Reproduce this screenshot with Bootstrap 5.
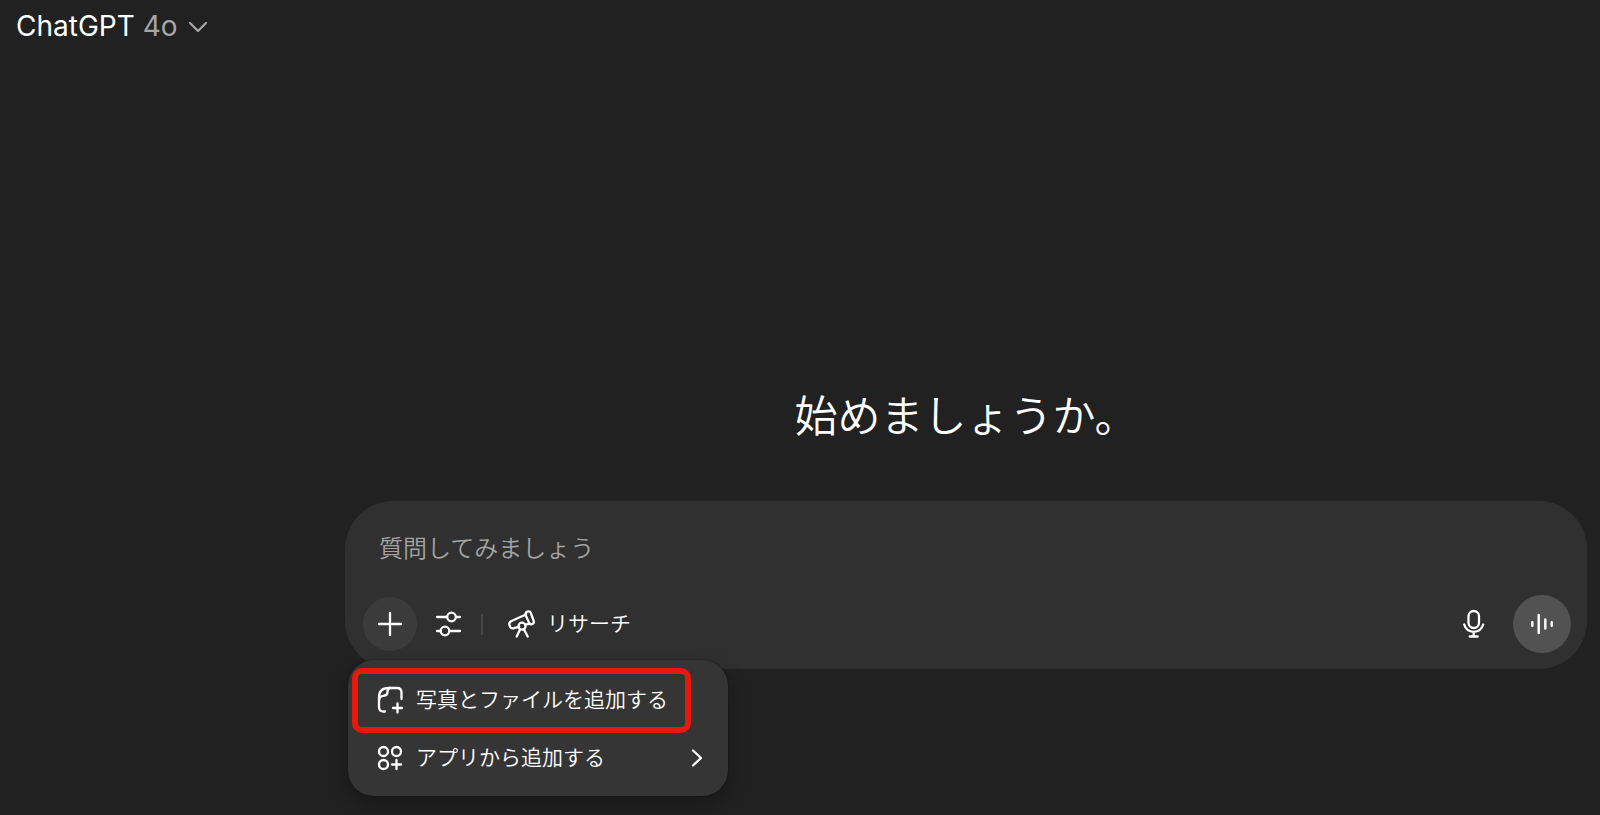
<!DOCTYPE html>
<html lang="ja" data-bs-theme="dark">
<head>
<meta charset="utf-8">
<meta name="viewport" content="width=device-width, initial-scale=1">
<title>ChatGPT</title>
<link href="https://cdn.jsdelivr.net/npm/bootstrap@5.3.0/dist/css/bootstrap.min.css" rel="stylesheet">
<style>
  body { background: #212121; color: #fff; font-family: Inter, "Noto Sans CJK JP", sans-serif; font-weight: 350; }
  svg { display: block; fill: none; stroke: currentColor; stroke-width: 2.3; stroke-linecap: round; stroke-linejoin: round; }
  .btn { --bs-btn-color: #fff; --bs-btn-border-width: 0; --bs-btn-padding-x: 0; --bs-btn-padding-y: 0; font-weight: inherit; }
  .model-switch { font-size: 28px; line-height: 36px; font-weight: 380; }
  .model-name { color: #a6a6a6; }
  .chat-area { padding: 344px 13px 0 345px; }
  .greeting { font-size: 43px; line-height: 56px; font-weight: 350; margin-bottom: 57px; }
  .composer { background: #303030; border-radius: 48px; padding: 30px 16px 16px 18px; }
  .prompt { background: none; border: 0; outline: 0; color: #fff; font-size: 24px; font-weight: 350; line-height: 36px; height: 36px; padding: 0 16px; margin-bottom: 28px; }
  .prompt::placeholder { color: #a3a3a3; opacity: 1; }
  .round-btn { width: 54px; height: 54px; background: #3b3b3b; }
  .voice-btn { width: 58px; height: 58px; background: #525252; }
  .divider { width: 2px; height: 21px; background: #484848; margin: 0 24px 0 18px; }
  .research { font-size: 21px; line-height: 28px; gap: 10px; }
  .add-menu { position: absolute; top: 100%; left: 3px; margin-top: -9px; width: 380px; background: #353535; border-radius: 26px; padding: 11px 22px 9px 29px; box-shadow: 0 8px 20px rgba(0,0,0,.3), 0 0 2px rgba(0,0,0,.4); }
  .menu-row { font-size: 21px; line-height: 28px; height: 58px; }
  .highlight { position: absolute; top: 8px; left: 4px; width: 339px; height: 65px; border: 6px solid #e8190c; border-radius: 10px; pointer-events: none; }
</style>
</head>
<body class="min-vh-100 d-flex flex-column">
<header class="d-flex px-3 pt-2">
  <button type="button" class="btn model-switch d-flex align-items-center">
    <span>ChatGPT</span><span class="model-name ms-2">4o</span>
    <svg class="model-name ms-2" width="24" height="24" viewBox="0 0 24 24"><path d="M4 9l8 8 8-8"/></svg>
  </button>
</header>
<main class="chat-area flex-grow-1">
  <h1 class="greeting text-center">始めましょうか。</h1>
  <form class="composer position-relative">
    <input type="text" class="prompt w-100 d-block" placeholder="質問してみましょう" aria-label="質問してみましょう">
    <div class="d-flex align-items-center">
      <button type="button" class="btn round-btn rounded-circle d-flex align-items-center justify-content-center" aria-label="追加">
        <svg width="26" height="26" viewBox="0 0 26 26"><path d="M13 2v22M2 13h22"/></svg>
      </button>
      <button type="button" class="btn ms-3" aria-label="ツール">
        <svg width="30" height="28" viewBox="-3 0 30 28"><path d="M1 7h10M20 7h4M1 21h4M14 21h10"/><circle cx="15.500" cy="7" r="4.300"/><circle cx="9" cy="21" r="4.300"/></svg>
      </button>
      <span class="divider"></span>
      <button type="button" class="btn research d-flex align-items-center">
        <svg width="30" height="30" viewBox="0 0 30 30"><path d="M19 5.500L5 11.800c-2.400 1-3.200 2.300-2.500 4.400l.4 1.100c.7 1.900 2.200 2.400 4.300 1.800l5-1.400M18.500 15.700L23 14.600"/><path d="M18.700 6.200c-.5-1.900.1-3 1.700-3.600 1.700-.6 3 .1 3.500 1.600l2.800 7.800c.5 1.600-.1 2.700-1.600 3.100-1.700.5-2.700-.1-3.200-1.700z"/><circle cx="15" cy="17.200" r="3.500"/><path d="M13 20.500L9.700 27.500M17 20.500l3.700 7"/></svg>
        <span>リサーチ</span>
      </button>
      <button type="button" class="btn ms-auto me-4" aria-label="音声入力">
        <svg width="23" height="30" viewBox="0 0 23 30"><rect x="6.500" y="2" width="10.500" height="17" rx="5.250"/><path d="M2.200 15.500c1.500 5 5 7.300 9.500 7.300s8-2.300 9.500-7.300M11.700 23v4M7.700 27.500h8"/></svg>
      </button>
      <button type="button" class="btn voice-btn rounded-circle d-flex align-items-center justify-content-center ms-1" aria-label="音声モード">
        <svg width="24" height="22" viewBox="0 0 24 22"><path d="M2.300 9.300v3.400M8.700 2v18M15.300 6.500v9M21.700 9.300v3.400" stroke-width="2.400"/></svg>
      </button>
    </div>
    <div class="add-menu">
      <button type="button" class="btn menu-row d-flex align-items-center w-100">
        <svg width="27" height="28" viewBox="0 0 27 28"><path d="M8 25.500H6.500C3.500 25.500 2 24 2 21v-9.500C2 5.500 5.500 2 11.500 2H20c3 0 4.500 1.500 4.500 4.500V13"/><path d="M2.500 13c0-2 1.500-3 4-3.200 2.800-.2 4-1.600 4-4 0-2.500 1.300-3.800 3-3.800M20.500 17.500v9M16 22h9"/></svg>
        <span class="ms-2 ps-1">写真とファイルを追加する</span>
      </button>
      <button type="button" class="btn menu-row d-flex align-items-center w-100">
        <svg width="27" height="28" viewBox="0 0 27 28"><circle cx="6.500" cy="7.500" r="4.500"/><circle cx="19.500" cy="7.500" r="4.500"/><circle cx="6.500" cy="20.500" r="4.500"/><path d="M19.500 16v9M15 20.500h9"/></svg>
        <span class="ms-2 ps-1">アプリから追加する</span>
        <svg class="ms-auto" width="18" height="24" viewBox="0 0 18 24"><path d="M5 4.500l8 7.500-8 7.500"/></svg>
      </button>
      <div class="highlight"></div>
    </div>
  </form>
</main>
<script src="https://cdn.jsdelivr.net/npm/bootstrap@5.3.0/dist/js/bootstrap.bundle.min.js"></script>
</body>
</html>
